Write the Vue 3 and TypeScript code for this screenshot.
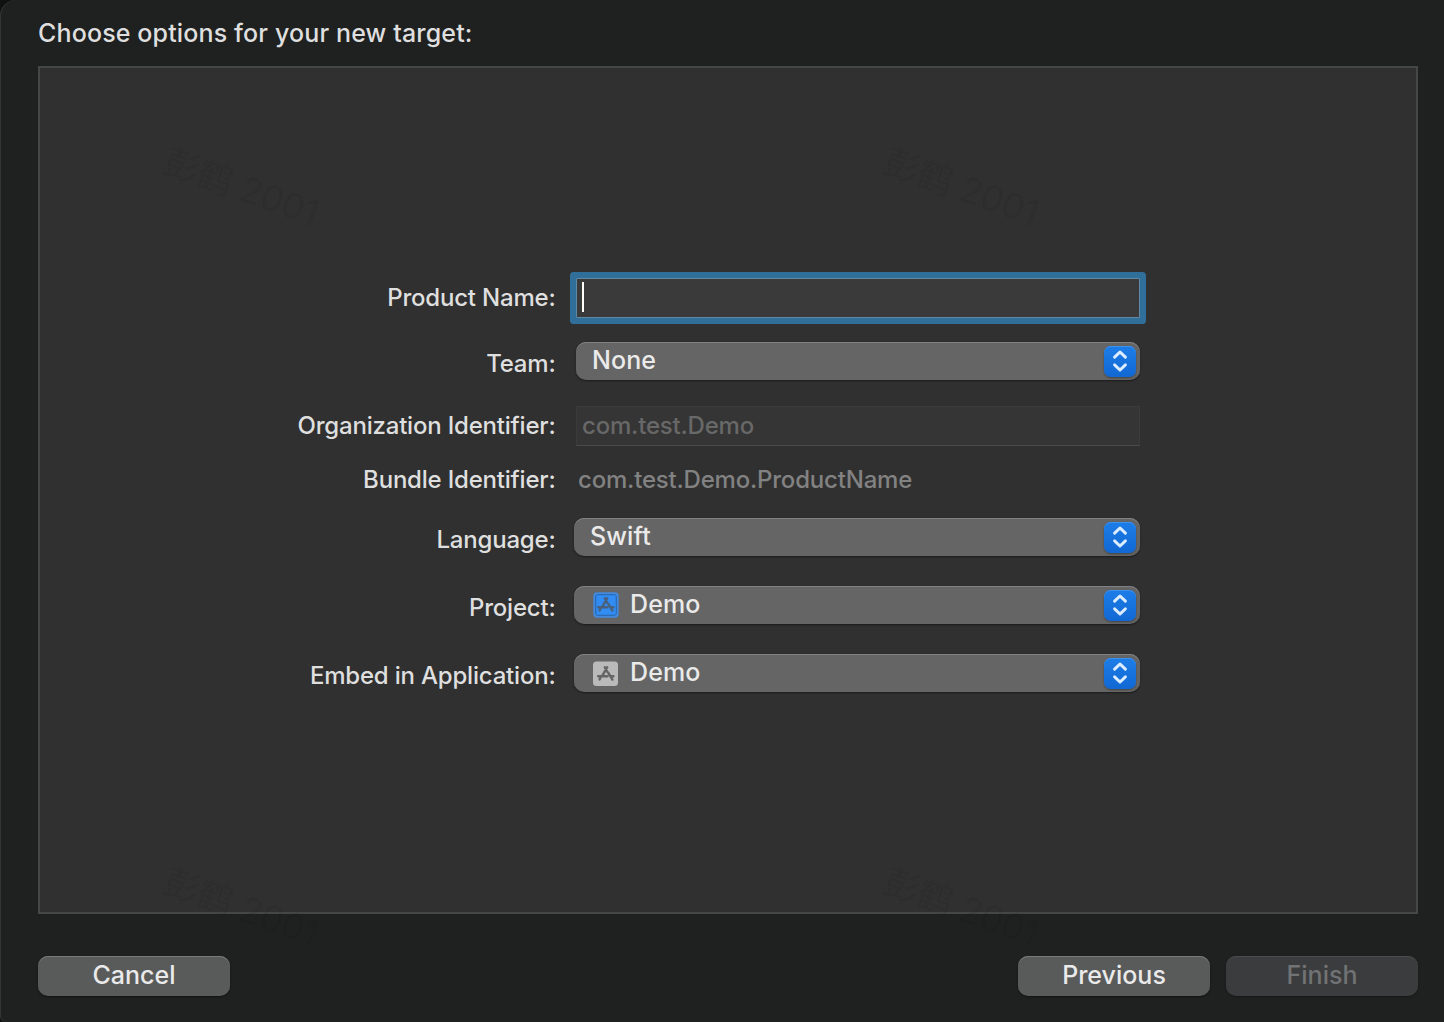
<script setup lang="ts">
type Kind = 'input' | 'popup' | 'disabled' | 'static'

interface Field {
  id: string
  label: string
  kind: Kind
  value: string
  icon?: 'project' | 'app'
}

const fields: Field[] = [
  { id: 'product', label: 'Product Name:', kind: 'input', value: '' },
  { id: 'team', label: 'Team:', kind: 'popup', value: 'None' },
  { id: 'organization', label: 'Organization Identifier:', kind: 'disabled', value: 'com.test.Demo' },
  { id: 'bundle', label: 'Bundle Identifier:', kind: 'static', value: 'com.test.Demo.ProductName' },
  { id: 'language', label: 'Language:', kind: 'popup', value: 'Swift' },
  { id: 'project', label: 'Project:', kind: 'popup', value: 'Demo', icon: 'project' },
  { id: 'embed', label: 'Embed in Application:', kind: 'popup', value: 'Demo', icon: 'app' },
]

const watermarks = ['wm-a', 'wm-b', 'wm-c', 'wm-d']
</script>

<template>
  <div class="backdrop">
    <main class="sheet">
      <h1 class="title"><span>Choose options for your new target:</span></h1>

      <section class="panel">
        <div v-for="f in fields" :key="f.id" class="row" :class="[f.id, f.kind]">
          <div class="label"><span>{{ f.label }}</span></div>
          <div v-if="f.kind === 'input'" class="text-input"><i class="caret"></i></div>
          <div v-else-if="f.kind === 'disabled'" class="text-disabled"><span>{{ f.value }}</span></div>
          <div v-else-if="f.kind === 'static'" class="text-static"><span>{{ f.value }}</span></div>
          <div v-else class="popup-button">
            <svg v-if="f.icon" class="app-icon" :class="f.icon" width="26" height="26" viewBox="0 0 26 26">
              <rect v-if="f.icon === 'project'" class="tile" x="0.3" y="0.3" width="25.4" height="25.4" rx="4" />
              <rect v-else class="tile" x="0" y="0.5" width="25" height="24.5" rx="3.5" />
              <rect v-if="f.icon === 'project'" class="inset" x="2.7" y="2.7" width="20.6" height="20.6" rx="2" />
              <g class="glyph">
                <path d="M14.2 6.2 9.4 14.6M11.8 6.2l2.6 4.8M15.2 11.6l4.2 7M5.2 15.3h9.3M17.6 15.3h2.8M7.4 17l-.8 1.4" />
              </g>
            </svg>
            <span class="value">{{ f.value }}</span>
            <svg class="stepper" width="32" height="31" viewBox="0 0 32 31">
              <path d="M10.6 11.2 16 6l5.4 5.2M10.6 18.8 16 24l5.4-5.2" />
            </svg>
          </div>
        </div>
      </section>

      <footer class="actions">
        <button class="push cancel"><span>Cancel</span></button>
        <button class="push previous"><span>Previous</span></button>
        <button class="push finish" disabled><span>Finish</span></button>
      </footer>
    </main>
    <div v-for="w in watermarks" :key="w" class="watermark" :class="w">彭鹤 2001</div>
  </div>
</template>

<style>
body {
  margin: 0;
  background: #1f2120;
}
</style>

<style scoped>
.backdrop {
  position: relative;
  width: 1444px;
  height: 1022px;
  overflow: hidden;
  background: #101111;
  font-family: Inter, "Liberation Sans", sans-serif;
  font-size: 24px;
  font-weight: 450;
  letter-spacing: -0.2px;
  color: #dfdfdf;
}
.sheet {
  box-sizing: border-box;
  width: 1460px;
  height: 1022px;
  padding: 0 41px 0 38px;
  border-radius: 16px 0 0 6px;
  box-shadow: inset 1px 0 0 #343635;
  background: #1f2120;
}
.title {
  display: flex;
  align-items: center;
  height: 66px;
  margin: 0;
  font-size: 25px;
  font-weight: 450;
  letter-spacing: 0.14px;
  line-height: 30px;
  white-space: nowrap;
}
.panel {
  box-sizing: border-box;
  width: 1380px;
  height: 848px;
  padding-top: 210px;
  border: 2px solid #454646;
  background: #303030;
}
.row {
  display: flex;
  height: 38px;
  margin-bottom: 30px;
}
.row.product { height: 40px; margin-bottom: 24px; }
.row.team { margin-bottom: 26px; }
.row.organization { height: 40px; margin-bottom: 18px; }
.row.bundle { height: 32px; margin-bottom: 22px; }
.label {
  box-sizing: border-box;
  display: flex;
  align-items: center;
  justify-content: flex-end;
  width: 515.5px;
  padding-bottom: 2px;
  margin-right: 18.5px;
  white-space: nowrap;
}
.popup .label { padding: 4px 0 0; }
.product .label,
.team .label,
.organization .label { margin-right: 20.5px; }
.text-input {
  box-sizing: border-box;
  display: flex;
  align-items: center;
  width: 564px;
  padding-left: 5px;
  border: 1px solid #6189a4;
  background: #3a3a3a;
  box-shadow: 0 0 0 6px #316f9b;
  border-radius: 1px;
}
.caret {
  width: 2px;
  height: 30px;
  margin-bottom: 2px;
  background: #fff;
}
.text-disabled {
  box-sizing: border-box;
  display: flex;
  align-items: center;
  width: 564px;
  padding-left: 5px;
  border: 1px solid #3b3b3b;
  border-bottom-color: #4b4b4b;
  padding-bottom: 1px;
  background: #353535;
  color: #686868;
}
.text-static {
  display: flex;
  align-items: center;
  padding: 0 0 2px 4px;
  color: #828282;
}
.popup-button {
  box-sizing: border-box;
  display: flex;
  align-items: center;
  width: 566px;
  height: 38px;
  padding: 0 4px 0 16px;
  border-radius: 10px;
  background: #656565;
  box-shadow: inset 0 1px 0 #828282, 0 1px 2px rgba(0, 0, 0, 0.45);
  font-size: 25px;
  letter-spacing: 0.1px;
  color: #eaeaea;
}
.team .popup-button { width: 564px; }
.value {
  flex: 1;
  padding-bottom: 2px;
}
.app-icon {
  margin: 0 11px 0 3px;
}
.app-icon.app { margin-top: 1px; }
.tile { fill: #bababa; }
.glyph path {
  fill: none;
  stroke: #656565;
  stroke-width: 2.4;
  stroke-linecap: round;
}
.project .tile { fill: #4389dd; }
.project .inset { fill: #318cf4; stroke: #2764ac; stroke-width: 1; }
.project .glyph path { stroke: #49617c; }
.stepper {
  border-radius: 7px;
  background: linear-gradient(#1c7de8, #1168d3);
  box-shadow: inset 0 1px 0 #3b91ed, 0 1px 2px rgba(0, 0, 0, 0.35);
}
.stepper path {
  fill: none;
  stroke: #dcecff;
  stroke-width: 3;
  stroke-linecap: round;
  stroke-linejoin: round;
}
.actions {
  display: flex;
  width: 1380px;
  margin-top: 42px;
  gap: 16px;
}
.push {
  width: 192px;
  height: 40px;
  padding: 0 0 2px;
  border: 0;
  border-radius: 10px;
  background: #595b5a;
  box-shadow: inset 0 1px 0 #7a7c7b, 0 1px 2px rgba(0, 0, 0, 0.45);
  font-family: inherit;
  font-size: 25px;
  font-weight: 450;
  letter-spacing: 0;
  color: #eaeaea;
}
.previous { margin-left: auto; }
.finish {
  background: #3b3c3e;
  box-shadow: inset 0 1px 0 #4b4c4d, 0 1px 2px rgba(0, 0, 0, 0.3);
  color: #717274;
}
.watermark {
  position: absolute;
  width: 180px;
  font-family: Inter, "Noto Sans CJK SC", sans-serif;
  font-size: 36px;
  font-weight: 400;
  letter-spacing: -0.3px;
  line-height: 40px;
  text-align: center;
  white-space: nowrap;
  color: rgba(0, 0, 0, 0.085);
  transform: rotate(20deg);
}
.wm-a { left: 151px; top: 167px; }
.wm-b { left: 871px; top: 167px; }
.wm-c { left: 151px; top: 887px; }
.wm-d { left: 871px; top: 887px; }
</style>
